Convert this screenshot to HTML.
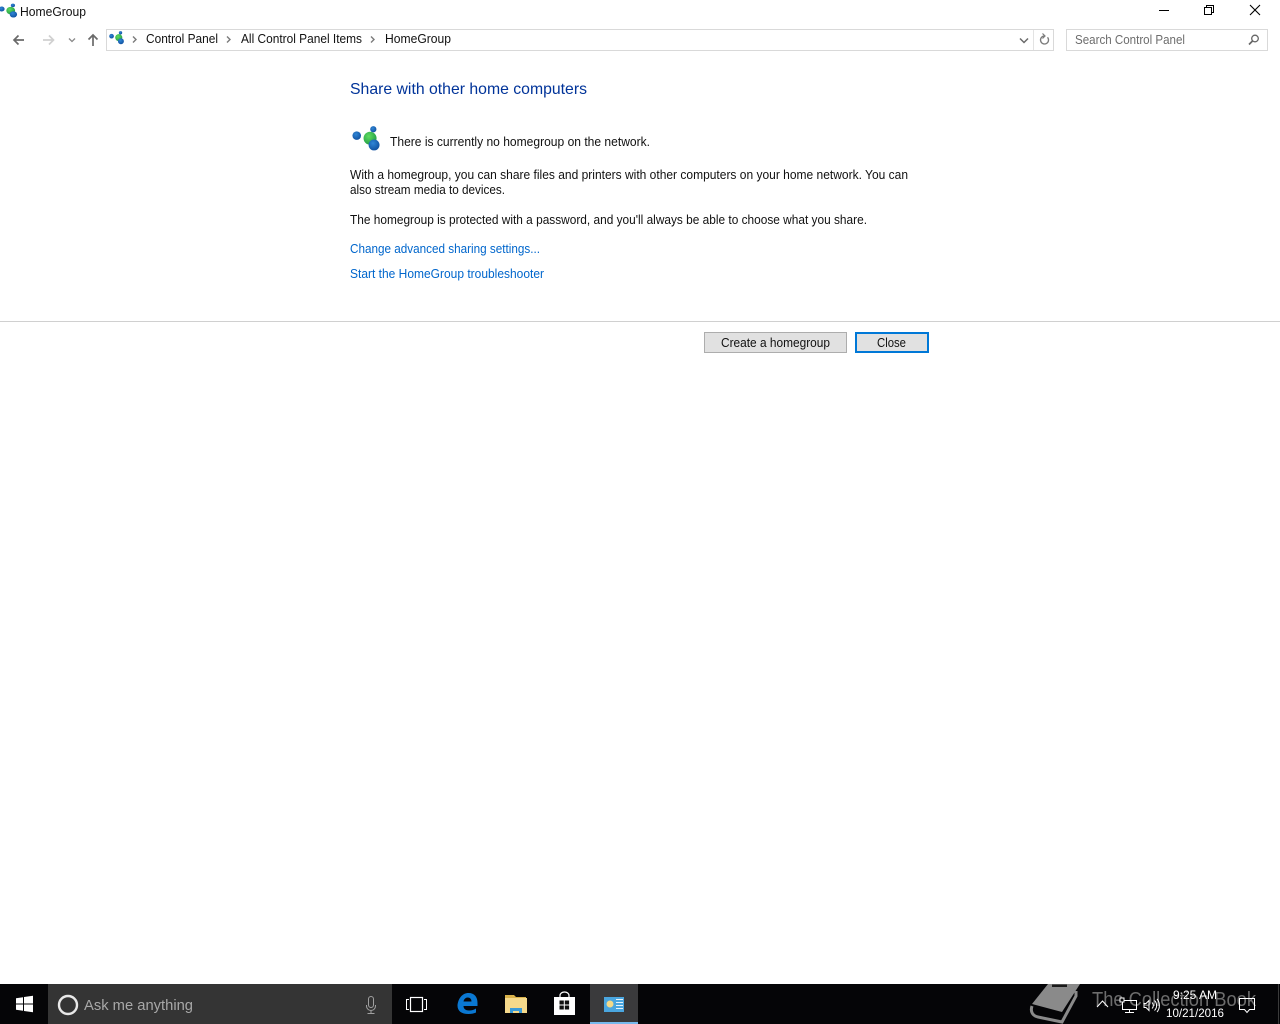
<!DOCTYPE html>
<html lang="en">
<head>
<meta charset="utf-8">
<title>HomeGroup</title>
<style>
html,body{margin:0;padding:0;background:#fff;width:1280px;height:1024px;overflow:hidden}
svg{display:block;position:absolute;left:0;top:0}
text{font-family:"Liberation Sans",sans-serif;font-size:12.5px;fill:#111;white-space:pre}
.l{fill:#0066cc}
.h{fill:#003399;font-size:16px}
.g{fill:#6d6d6d}
</style>
</head>
<body>
<svg width="1280" height="1024" viewBox="0 0 1280 1024" xmlns="http://www.w3.org/2000/svg">
<defs>
<radialGradient id="bl" cx="40%" cy="35%" r="70%"><stop offset="0" stop-color="#2f86d6"/><stop offset="1" stop-color="#0f4f9e"/></radialGradient>
<radialGradient id="gr" cx="40%" cy="35%" r="70%"><stop offset="0" stop-color="#5fdc5f"/><stop offset="1" stop-color="#1f9a45"/></radialGradient>
<g id="hg">
<circle cx="3.200" cy="6.500" r="2.900" fill="url(#bl)"/>
<circle cx="14.400" cy="2.200" r="2.100" fill="url(#bl)"/>
<circle cx="12.200" cy="8.300" r="4.400" fill="url(#gr)"/>
<circle cx="14.900" cy="12.800" r="3.700" fill="url(#bl)"/>
</g>
</defs>

<!-- title bar -->
<use href="#hg" transform="translate(-1.500,3.500) scale(1,.85)"/>
<text x="20" y="16" textLength="66" lengthAdjust="spacingAndGlyphs">HomeGroup</text>
<path d="M1159 10.500h10" stroke="#000" stroke-width="1"/>
<path d="M1204.500 7.500h7v7h-7zM1206.500 7.500v-2h7v7h-2" fill="none" stroke="#000" stroke-width="1"/>
<path d="M1250 5l10 10M1260 5l-10 10" stroke="#000" stroke-width="1.100"/>

<!-- nav -->
<path d="M14 40h10M18.500 35.500L14 40l4.500 4.500" fill="none" stroke="#6a6a6a" stroke-width="1.700"/>
<path d="M43 40h10M49 35.500l4.500 4.500L49 44.500" fill="none" stroke="#d0d0d0" stroke-width="1.700"/>
<path d="M69 38.500l3 3 3-3" fill="none" stroke="#8a8a8a" stroke-width="1.300"/>
<path d="M93 46V35M88.500 39.500L93 35l4.500 4.500" fill="none" stroke="#6a6a6a" stroke-width="1.700"/>

<!-- address bar -->
<rect x="106.500" y="29.500" width="947" height="21" fill="#fff" stroke="#d9d9d9"/>
<path d="M1033.500 30v20" stroke="#e3e3e3"/>
<use href="#hg" transform="translate(109,31) scale(.8)"/>
<path d="M133 36.500l3 3-3 3" fill="none" stroke="#7a7a7a" stroke-width="1.400"/>
<text x="146" y="43" textLength="72" lengthAdjust="spacingAndGlyphs">Control Panel</text>
<path d="M227 36.500l3 3-3 3" fill="none" stroke="#7a7a7a" stroke-width="1.400"/>
<text x="241" y="43" textLength="121" lengthAdjust="spacingAndGlyphs">All Control Panel Items</text>
<path d="M371 36.500l3 3-3 3" fill="none" stroke="#7a7a7a" stroke-width="1.400"/>
<text x="385" y="43" textLength="66" lengthAdjust="spacingAndGlyphs">HomeGroup</text>
<path d="M1020 38.500l4 4 4-4" fill="none" stroke="#6a6a6a" stroke-width="1.500"/>
<path d="M1047.500 37.300a4 4 0 1 1-3.500-1.300" fill="none" stroke="#7a7a7a" stroke-width="1.300"/>
<path d="M1042.500 33.500l2.500 2.500-2.500 2.500" fill="none" stroke="#7a7a7a" stroke-width="1.200"/>

<!-- search -->
<rect x="1066.500" y="29.500" width="201" height="21" fill="#fff" stroke="#d9d9d9"/>
<text x="1075" y="44" class="g" textLength="110" lengthAdjust="spacingAndGlyphs">Search Control Panel</text>
<circle cx="1255" cy="38.500" r="3.300" fill="none" stroke="#666" stroke-width="1.300"/>
<path d="M1252.500 41L1249 44.500" stroke="#666" stroke-width="1.700"/>

<!-- content -->
<text x="350" y="94" class="h" textLength="237" lengthAdjust="spacingAndGlyphs">Share with other home computers</text>
<use href="#hg" transform="translate(352,126) scale(1.480)"/>
<text x="390" y="146" textLength="260" lengthAdjust="spacingAndGlyphs">There is currently no homegroup on the network.</text>
<text x="350" y="179" textLength="558" lengthAdjust="spacingAndGlyphs">With a homegroup, you can share files and printers with other computers on your home network. You can</text>
<text x="350" y="194" textLength="155" lengthAdjust="spacingAndGlyphs">also stream media to devices.</text>
<text x="350" y="224" textLength="517" lengthAdjust="spacingAndGlyphs">The homegroup is protected with a password, and you'll always be able to choose what you share.</text>
<text x="350" y="253" class="l" textLength="190" lengthAdjust="spacingAndGlyphs">Change advanced sharing settings...</text>
<text x="350" y="278" class="l" textLength="194" lengthAdjust="spacingAndGlyphs">Start the HomeGroup troubleshooter</text>

<!-- divider & buttons -->
<rect x="0" y="321" width="1280" height="1" fill="#d0d0d0"/>
<rect x="704.500" y="332.500" width="142" height="20" fill="#e1e1e1" stroke="#adadad"/>
<text x="721" y="347" textLength="109" lengthAdjust="spacingAndGlyphs">Create a homegroup</text>
<rect x="856" y="333" width="72" height="19" fill="#e1e1e1" stroke="#0078d7" stroke-width="2"/>
<text x="877" y="347" textLength="29" lengthAdjust="spacingAndGlyphs">Close</text>

<!-- taskbar -->
<rect x="0" y="984" width="1280" height="40" fill="#050507"/>
<path d="M16 998.200l7-1v6.300h-7zM24 997l9-1.300v7.800h-9zM16 1004.500h7v6.300l-7-1zM24 1004.500h9v7.800l-9-1.300z" fill="#fff"/>
<rect x="48" y="984" width="344" height="40" fill="#343434"/>
<circle cx="68" cy="1005" r="9" fill="none" stroke="#e8e8e8" stroke-width="2.400"/>
<text x="84" y="1010" style="font-size:15px;fill:#a8a8a8" textLength="109" lengthAdjust="spacingAndGlyphs">Ask me anything</text>
<rect x="368.500" y="996.500" width="5" height="11" rx="2.500" fill="none" stroke="#a0a0a0"/>
<path d="M366.500 1005v1a4.500 4.500 0 0 0 9 0v-1M371 1010.500v2.500M367.500 1013.500h7" fill="none" stroke="#a0a0a0"/>

<!-- task view -->
<rect x="410.500" y="997.500" width="12" height="14" fill="none" stroke="#fff" stroke-width="1.200"/>
<path d="M409 999.500h-2.500v10h2.500M424 999.500h2.500v10h-2.500" fill="none" stroke="#fff"/>

<!-- edge -->
<path d="M457.500 1005c1-7 5-12 11-12 6 0 9 4 9 10v3h-14c0 3 2.500 4.500 5.500 4.500 3 0 5-.8 7-2v4c-2 1-4.500 1.500-7.500 1.500-7 0-11-3-11-8.500 0-1-.2-.5 0-.5zm6-3.500h8c0-2.500-1.500-4-3.800-4-2 0-3.700 1.500-4.200 4z" fill="#0a78d2"/>

<!-- explorer -->
<path d="M505 995h9l2 2h10v4h-21z" fill="#d9b24a"/>
<rect x="505" y="998" width="22" height="15" fill="#f5d98b"/>
<path d="M510 1013v-5h12v5h-3v-2h-6v2z" fill="#3a9bd8"/>

<!-- store -->
<path d="M560 997v-1.500a4.500 3.500 0 0 1 9 0v1.500" fill="none" stroke="#fff" stroke-width="1.200"/>
<path d="M554 997h21v18h-21z" fill="#fff"/>
<path d="M559.500 1000.500h4.300v4h-4.300zM564.800 1000.500h4.300v4h-4.300zM559.500 1005.500h4.300v4h-4.300zM564.800 1005.500h4.300v4h-4.300z" fill="#111"/>

<!-- active control panel -->
<rect x="590" y="984" width="48" height="40" fill="#3a3a3c"/>
<rect x="590" y="1022" width="48" height="2" fill="#76b9ed"/>
<rect x="604" y="997" width="20" height="15" fill="#4aa6e0"/>
<circle cx="610" cy="1004" r="3.500" fill="#f3d98a"/>
<path d="M616 999.500h7M616 1002.500h7M616 1005.500h7M616 1008.500h7" stroke="#e6f3fb"/>

<!-- watermark -->
<path d="M1032 1004L1048 984H1080L1062 1012z" fill="#8a8a8a"/>
<path d="M1052 984.500h15v2.500h-15z" fill="#1a1a1a"/>
<path d="M1032 1006c-2 6 1 10 6 11l24 5 14-26v-5" fill="none" stroke="#8a8a8a" stroke-width="3"/>
<text x="1092" y="1006" style="font-size:20px;fill:#6c6c6c" textLength="164" lengthAdjust="spacingAndGlyphs">The Collection Book</text>

<!-- tray -->
<path d="M1097 1007l5.500-6 5.500 6" fill="none" stroke="#fff"/>
<path d="M1122.500 1000.500h14v9h-14zM1129.500 1009.500v3M1125 1012.500h9" fill="none" stroke="#fff"/>
<rect x="1120" y="998" width="4" height="4" fill="#050507" stroke="#fff"/>
<path d="M1144 1003.500h2l3-3v10l-3-3h-2z" fill="none" stroke="#fff"/>
<path d="M1152 1002.500a4 4 0 0 1 0 6M1154.500 1000.500a7 7 0 0 1 0 10M1157 999a10 10 0 0 1 0 13" fill="none" stroke="#fff"/>
<text x="1173" y="999" style="fill:#fff;font-size:12px" textLength="44" lengthAdjust="spacingAndGlyphs">9:25 AM</text>
<text x="1166" y="1017" style="fill:#fff;font-size:12px" textLength="58" lengthAdjust="spacingAndGlyphs">10/21/2016</text>
<path d="M1239.500 998.500h15v11h-5l-2.500 3-2.500-3h-5z" fill="none" stroke="#fff"/>
<rect x="1278" y="984" width="1" height="40" fill="#3a3a3a"/>
</svg>
</body>
</html>
